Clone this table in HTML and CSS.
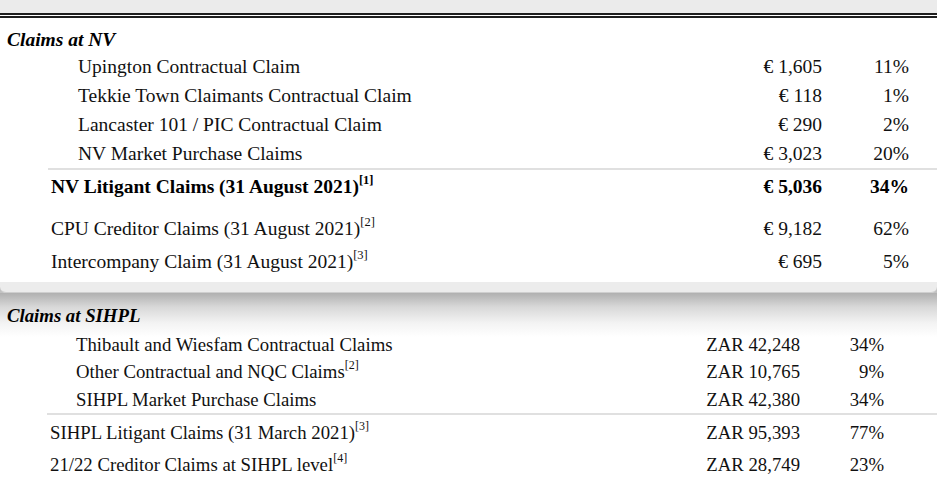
FILE: index.html
```html
<!DOCTYPE html>
<html lang="en">
<head>
<meta charset="utf-8">
<title>Claims</title>
<link rel="stylesheet" href="styles.css">
</head>
<body>
<div class="topbar"></div>
<section class="card">
  <div class="sec-head nv-head">Claims at NV</div>
  <div class="sub-group nv-sub">
    <div class="row nv-row"><span class="label">Upington Contractual Claim</span><span class="amt">€ 1,605</span><span class="pct">11%</span></div>
    <div class="row nv-row"><span class="label">Tekkie Town Claimants Contractual Claim</span><span class="amt">€ 118</span><span class="pct">1%</span></div>
    <div class="row nv-row"><span class="label">Lancaster 101 / PIC Contractual Claim</span><span class="amt">€ 290</span><span class="pct">2%</span></div>
    <div class="row nv-row"><span class="label">NV Market Purchase Claims</span><span class="amt">€ 3,023</span><span class="pct">20%</span></div>
  </div>
  <div class="total-block nv-total">
    <div class="row nv-main bold first"><span class="label">NV Litigant Claims (31 August 2021)<sup class="fn">[1]</sup></span><span class="amt">€ 5,036</span><span class="pct">34%</span></div>
    <div class="row nv-main cpu"><span class="label">CPU Creditor Claims (31 August 2021)<sup class="fn">[2]</sup></span><span class="amt">€ 9,182</span><span class="pct">62%</span></div>
    <div class="row nv-main inter"><span class="label">Intercompany Claim (31 August 2021)<sup class="fn">[3]</sup></span><span class="amt">€ 695</span><span class="pct">5%</span></div>
  </div>
</section>
<div class="lip-wrap"><div class="lip"></div></div>
<section class="sihpl">
  <div class="sec-head sihpl-head">Claims at SIHPL</div>
  <div class="sub-group sihpl-sub">
    <div class="row s-row"><span class="label">Thibault and Wiesfam Contractual Claims</span><span class="amt">ZAR 42,248</span><span class="pct">34%</span></div>
    <div class="row s-row"><span class="label">Other Contractual and NQC Claims<sup class="fn">[2]</sup></span><span class="amt">ZAR 10,765</span><span class="pct">9%</span></div>
    <div class="row s-row"><span class="label">SIHPL Market Purchase Claims</span><span class="amt">ZAR 42,380</span><span class="pct">34%</span></div>
  </div>
  <div class="total-block s-total">
    <div class="row s-main"><span class="label">SIHPL Litigant Claims (31 March 2021)<sup class="fn">[3]</sup></span><span class="amt">ZAR 95,393</span><span class="pct">77%</span></div>
    <div class="row s-main"><span class="label">21/22 Creditor Claims at SIHPL level<sup class="fn">[4]</sup></span><span class="amt">ZAR 28,749</span><span class="pct">23%</span></div>
  </div>
</section>
</body>
</html>
```
FILE: styles.css
```css
html, body {
  margin: 0;
  padding: 0;
  background: #ffffff;
}
body {
  width: 937px;
  height: 483px;
  overflow: hidden;
  font-family: "Liberation Serif", "Times New Roman", serif;
  color: #111;
}
.topbar {
  height: 13px;
  background: #ebebeb;
}
.card {
  background: #fff;
  border-top: 5px double #1e1e1e;
  padding-top: 10px;
  padding-bottom: 5px;
  font-size: 19.5px;
}
.sec-head {
  font-weight: bold;
  font-style: italic;
  padding-left: 7px;
  display: flex;
  align-items: center;
  color: #000;
}
.nv-head {
  height: 23.5px;
}
.row {
  display: flex;
  align-items: center;
  white-space: nowrap;
}
.label {
  flex: 1;
}
.amt {
  width: 150px;
  text-align: right;
}
.pct {
  text-align: right;
}
.card .pct {
  width: 87px;
}
.card .row {
  padding-right: 28px;
}
.nv-row {
  height: 29.1px;
  line-height: 29.1px;
  padding-left: 78px;
}
.total-block {
  border-top: 2px solid #e0e0e0;
}
.nv-total {
  margin-left: 48px;
}
.nv-main {
  padding-left: 3px;
  height: 30px;
  line-height: 30px;
}
.nv-main.first {
  height: 34px;
  line-height: 34px;
}
.bold {
  font-weight: bold;
  color: #000;
}
.nv-main.cpu {
  margin-top: 10px;
}
.nv-main.inter {
  margin-top: 3px;
}
.fn {
  font-size: 12.5px;
  line-height: 0;
  vertical-align: 9px;
}
.lip-wrap {
  background: #c2c2c2;
}
.lip {
  height: 10px;
  background: #ececec;
  border-bottom: 1px solid #cfcfcf;
  border-radius: 0 0 6px 6px;
}
.sihpl {
  font-size: 18.75px;
  padding-top: 13px;
  background: linear-gradient(#b0b0b0 0, #d8d8d8 14px, #f3f3f3 30px, #fff 44px) no-repeat;
}
.sihpl-head {
  height: 20px;
  margin-bottom: 5px;
}
.sihpl .row {
  padding-right: 53px;
}
.sihpl .pct {
  width: 84px;
}
.s-row {
  height: 27.4px;
  line-height: 27.4px;
  padding-left: 76px;
}
.s-total {
  margin-left: 47px;
}
.s-main {
  padding-left: 3px;
  height: 28px;
  line-height: 28px;
  margin-top: 4px;
}
.sihpl .fn {
  font-size: 12px;
}
```
